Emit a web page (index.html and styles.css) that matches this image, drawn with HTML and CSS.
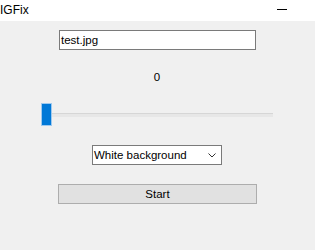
FILE: index.html
```html
<!DOCTYPE html>
<html>
<head>
<meta charset="utf-8">
<link rel="stylesheet" href="styles.css">
</head>
<body>
<div class="titlebar">
  <span class="title">IGFix</span>
  <span class="minimize"></span>
</div>
<div class="content">
  <div class="field">test.jpg</div>
  <div class="value">0</div>
  <div class="slider">
    <div class="thumb"></div>
    <div class="track"></div>
  </div>
  <div class="select">
    <span>White background</span>
    <svg class="chev" width="8" height="5" viewBox="0 0 8 5"><polyline points="0.5,0.5 4,4 7.5,0.5" fill="none" stroke="#333" stroke-width="1"/></svg>
  </div>
  <div class="button">Start</div>
</div>
</body>
</html>
```
FILE: styles.css
```css
html, body {
  margin: 0;
  padding: 0;
  background: #f0f0f0;
  font-family: "Liberation Sans", Arial, sans-serif;
  font-size: 11.5px;
  color: #000;
  width: 315px;
  height: 250px;
  overflow: hidden;
}
.titlebar {
  height: 21px;
  background: #fff;
  display: flex;
  align-items: center;
  justify-content: space-between;
  padding: 0 28px 0 0;
}
.title {
  font-size: 12px;
  line-height: 16px;
  margin-left: 0;
  margin-top: -2px;
}
.minimize {
  width: 10px;
  height: 1px;
  background: #000;
  margin-top: -3px;
}
.content {
  padding-top: 9px;
}
.field {
  box-sizing: border-box;
  margin-left: 59px;
  width: 197px;
  height: 20px;
  border: 1px solid #7a7a7a;
  background: #fff;
  line-height: 18px;
  padding-left: 1px;
}
.value {
  margin-top: 19px;
  margin-left: 152px;
  width: 10px;
  text-align: center;
  line-height: 16px;
}
.slider {
  margin-top: 18px;
  margin-left: 41px;
  width: 232px;
  height: 23px;
  display: flex;
  align-items: center;
}
.thumb {
  box-sizing: border-box;
  width: 11px;
  height: 23px;
  background: #0078d7;
  border: 1px solid #9fc9ee;
  flex: none;
}
.track {
  flex: 1;
  height: 4px;
  background: #e7e7e7;
  border-top: 1px solid #d6d6d6;
  box-sizing: border-box;
}
.select {
  box-sizing: border-box;
  margin-top: 19px;
  margin-left: 92px;
  width: 130px;
  height: 20px;
  border: 1px solid #7a7a7a;
  background: #fff;
  display: flex;
  align-items: center;
  justify-content: space-between;
  padding: 0 5px 0 1px;
  line-height: 16px;
}
.chev {
  display: block;
}
.button {
  box-sizing: border-box;
  margin-top: 19px;
  margin-left: 58px;
  width: 199px;
  height: 20px;
  border: 1px solid #adadad;
  background: #e1e1e1;
  text-align: center;
  line-height: 18px;
}
```
